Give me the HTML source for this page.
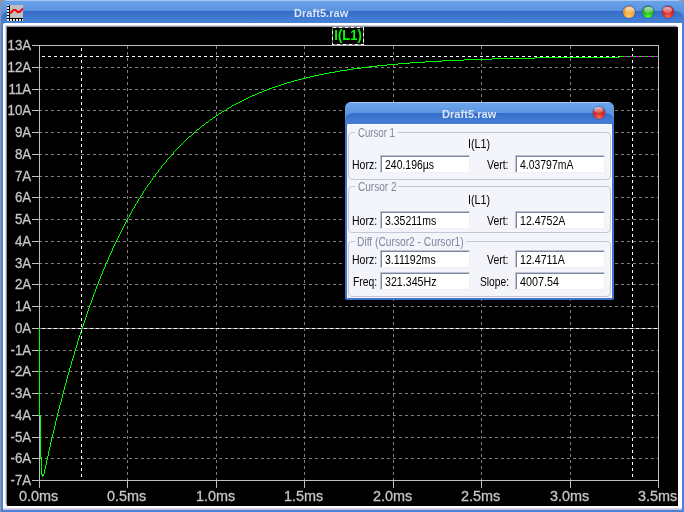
<!DOCTYPE html>
<html><head><meta charset="utf-8"><title>Draft5.raw</title>
<style>
html,body{margin:0;padding:0;}
body{width:684px;height:512px;overflow:hidden;background:#92949f;position:relative;font-family:"Liberation Sans",sans-serif;}
#win{position:absolute;left:1px;top:0;width:683px;height:512px;border-radius:6px 6px 0 0;overflow:hidden;
 background:#4a80d8;}
#tbar{position:absolute;left:0;top:0;width:683px;height:23px;
 background:linear-gradient(to bottom,#a9c4f0 0px,#a9c4f0 1px,#68a3e9 1px,#5b93df 11px,#5a90dd 23px);}
#tbar:after{content:"";position:absolute;left:0;top:11px;width:100%;height:12px;border-radius:9px 9px 0 0 / 7px 7px 0 0;
 background:linear-gradient(to bottom,#346bc8 0px,#3f78d0 6px,#4682d8 12px);}
#title{will-change:transform;position:absolute;left:292.5px;top:6px;white-space:nowrap;color:#dbe6f8;font-weight:bold;font-size:11px;line-height:14px;letter-spacing:0.05px;}
#frame{position:absolute;left:2px;top:23px;width:679px;height:487px;background:#fff;border-radius:2px 0 0 0;}
#frame:after{content:"";position:absolute;left:0;bottom:0;right:0;height:2px;background:linear-gradient(to bottom,#dcd6ea,#c8c0dc);}
#plot{position:absolute;left:6px;top:27px;width:671px;height:479px;background:#000;box-shadow:-1px -1px 0 #8f8fa6,-2px -2px 0 #d4d4e0;}
svg{position:absolute;left:0;top:0;}
#main{will-change:transform;}

#icon{position:absolute;left:6px;top:5px;}
.btn{position:absolute;width:12px;height:12px;border-radius:50%;box-shadow:0 0 0 1px rgba(40,80,190,.5);}
.b-or{background:radial-gradient(circle at 50% 88%,#ffcf60 0%,#f4a634 40%,#e8922c 75%,#d88428 100%);}
.b-gr{background:radial-gradient(circle at 50% 88%,#48ff38 0%,#24b424 40%,#229a2a 75%,#1e8a2c 100%);}
.b-rd{background:radial-gradient(circle at 50% 88%,#ff6a50 0%,#d42c28 40%,#c02424 75%,#b02024 100%);}
.btn:after{content:"";position:absolute;left:1.5px;top:0.5px;width:9px;height:6px;border-radius:50%;background:linear-gradient(to bottom,rgba(255,255,255,.7),rgba(255,255,255,.2));}
#dlg{position:absolute;left:345px;top:102px;width:269px;height:198px;border-radius:6px 6px 2px 2px;overflow:hidden;background:#3f74cf;}
#dbar{position:absolute;left:0;top:0;width:269px;height:22px;
 background:linear-gradient(to bottom,#a9c4f0 0px,#a9c4f0 1px,#6aa5ea 1px,#5d95e0 11px,#5a90dd 22px);}
#dbar:after{content:"";position:absolute;left:0;top:11px;width:100%;height:11px;border-radius:9px 9px 0 0 / 7px 7px 0 0;
 background:linear-gradient(to bottom,#346bc8 0px,#3f78d0 6px,#4580d6 11px);}
#dtitle{will-change:transform;position:absolute;left:96.5px;top:5px;white-space:nowrap;color:#dbe6f8;font-weight:bold;font-size:11px;line-height:14px;letter-spacing:0.05px;}
#dbody{will-change:transform;position:absolute;left:2px;top:22px;width:265px;height:174px;background:#f4f4fb;border-radius:2px 2px 0 0;box-shadow:inset 0 1px 0 #fff,inset -1px 0 0 #fff;}
.grp{position:absolute;left:1px;width:263px;border:1px solid #c6c6d6;border-radius:4px;box-sizing:border-box;}
.gap{position:absolute;left:6px;top:-1px;height:1px;background:#f4f4fb;}
.tx{position:absolute;font-size:13px;line-height:15px;height:15px;white-space:nowrap;transform-origin:0 0;color:#000;}
.tx.g{color:#7d869e;}
.in{position:absolute;width:90px;height:18px;box-sizing:border-box;background:#fff;border-top:1px solid #bfc3d0;border-left:1px solid #bfc3d0;border-right:1px solid #eeeef6;border-bottom:1px solid #eeeef6;box-shadow:inset 1px 1px 0 #7d859e;}
</style></head><body>
<div id="win">
 <div id="tbar"></div>
 <div id="title">Draft5.raw</div>

 <svg id="icon" width="16" height="16" viewBox="0 0 16 16" shape-rendering="crispEdges">
  <rect x="0" y="0" width="16" height="16" fill="#f0e8d8"/>
  <rect x="3" y="0" width="13" height="13" fill="#c0c0c0"/>
  <g fill="#000">
   <rect x="2" y="0" width="1" height="16"/>
   <rect x="0" y="13" width="16" height="1"/>
   <rect x="0" y="1" width="2" height="1"/><rect x="0" y="4" width="2" height="1"/><rect x="0" y="7" width="2" height="1"/><rect x="0" y="10" width="2" height="1"/>
   <rect x="5" y="14" width="1" height="2"/><rect x="8" y="14" width="1" height="2"/><rect x="11" y="14" width="1" height="2"/><rect x="14" y="14" width="1" height="2"/>
  </g>
  <polyline points="3,8.5 6.5,5 8.5,5 10.5,7 12.5,7 16,3.5" fill="none" stroke="#ff0000" stroke-width="2" shape-rendering="auto"/>
 </svg>
 <div class="btn b-or" style="left:622px;top:6px"></div>
 <div class="btn b-gr" style="left:641px;top:6px"></div>
 <div class="btn b-rd" style="left:660.7px;top:6px"></div>
 <div id="frame"></div>
 <div id="plot"></div>
</div>
<svg id="main" width="684" height="512" viewBox="0 0 684 512" shape-rendering="crispEdges">
 <g stroke="#808080" stroke-width="1" stroke-dasharray="3 3" fill="none">
<line x1="39" y1="67.5" x2="658" y2="67.5"/>
<line x1="39" y1="89.5" x2="658" y2="89.5"/>
<line x1="39" y1="110.5" x2="658" y2="110.5"/>
<line x1="39" y1="132.5" x2="658" y2="132.5"/>
<line x1="39" y1="154.5" x2="658" y2="154.5"/>
<line x1="39" y1="176.5" x2="658" y2="176.5"/>
<line x1="39" y1="197.5" x2="658" y2="197.5"/>
<line x1="39" y1="219.5" x2="658" y2="219.5"/>
<line x1="39" y1="241.5" x2="658" y2="241.5"/>
<line x1="39" y1="263.5" x2="658" y2="263.5"/>
<line x1="39" y1="284.5" x2="658" y2="284.5"/>
<line x1="39" y1="306.5" x2="658" y2="306.5"/>
<line x1="39" y1="328.5" x2="658" y2="328.5"/>
<line x1="39" y1="350.5" x2="658" y2="350.5"/>
<line x1="39" y1="371.5" x2="658" y2="371.5"/>
<line x1="39" y1="393.5" x2="658" y2="393.5"/>
<line x1="39" y1="415.5" x2="658" y2="415.5"/>
<line x1="39" y1="437.5" x2="658" y2="437.5"/>
<line x1="39" y1="458.5" x2="658" y2="458.5"/>
<line x1="127.5" y1="46" x2="127.5" y2="480"/>
<line x1="216.5" y1="46" x2="216.5" y2="480"/>
<line x1="304.5" y1="46" x2="304.5" y2="480"/>
<line x1="393.5" y1="46" x2="393.5" y2="480"/>
<line x1="481.5" y1="46" x2="481.5" y2="480"/>
<line x1="570.5" y1="46" x2="570.5" y2="480"/>
 </g>
 <g stroke="#c0c0c0" stroke-width="1" fill="none">
  <rect x="39.5" y="45.5" width="619" height="435"/>
<line x1="32" y1="45.5" x2="39" y2="45.5"/>
<line x1="32" y1="67.5" x2="39" y2="67.5"/>
<line x1="32" y1="89.5" x2="39" y2="89.5"/>
<line x1="32" y1="110.5" x2="39" y2="110.5"/>
<line x1="32" y1="132.5" x2="39" y2="132.5"/>
<line x1="32" y1="154.5" x2="39" y2="154.5"/>
<line x1="32" y1="176.5" x2="39" y2="176.5"/>
<line x1="32" y1="197.5" x2="39" y2="197.5"/>
<line x1="32" y1="219.5" x2="39" y2="219.5"/>
<line x1="32" y1="241.5" x2="39" y2="241.5"/>
<line x1="32" y1="263.5" x2="39" y2="263.5"/>
<line x1="32" y1="284.5" x2="39" y2="284.5"/>
<line x1="32" y1="306.5" x2="39" y2="306.5"/>
<line x1="32" y1="328.5" x2="39" y2="328.5"/>
<line x1="32" y1="350.5" x2="39" y2="350.5"/>
<line x1="32" y1="371.5" x2="39" y2="371.5"/>
<line x1="32" y1="393.5" x2="39" y2="393.5"/>
<line x1="32" y1="415.5" x2="39" y2="415.5"/>
<line x1="32" y1="437.5" x2="39" y2="437.5"/>
<line x1="32" y1="458.5" x2="39" y2="458.5"/>
<line x1="32" y1="480.5" x2="39" y2="480.5"/>
<line x1="39.5" y1="481" x2="39.5" y2="488"/>
<line x1="127.5" y1="481" x2="127.5" y2="488"/>
<line x1="216.5" y1="481" x2="216.5" y2="488"/>
<line x1="304.5" y1="481" x2="304.5" y2="488"/>
<line x1="393.5" y1="481" x2="393.5" y2="488"/>
<line x1="481.5" y1="481" x2="481.5" y2="488"/>
<line x1="570.5" y1="481" x2="570.5" y2="488"/>
<line x1="658.5" y1="481" x2="658.5" y2="488"/>
 </g>
 <g font-family="'Liberation Sans',sans-serif" font-size="14" fill="#c4c4c4" stroke="#c4c4c4" stroke-width="0.3" shape-rendering="auto">
<text transform="translate(31.2 50) scale(0.95 1)" text-anchor="end">13A</text>
<text transform="translate(31.2 72) scale(0.95 1)" text-anchor="end">12A</text>
<text transform="translate(31.2 94) scale(0.95 1)" text-anchor="end">11A</text>
<text transform="translate(31.2 115) scale(0.95 1)" text-anchor="end">10A</text>
<text transform="translate(31.2 137) scale(0.95 1)" text-anchor="end">9A</text>
<text transform="translate(31.2 159) scale(0.95 1)" text-anchor="end">8A</text>
<text transform="translate(31.2 181) scale(0.95 1)" text-anchor="end">7A</text>
<text transform="translate(31.2 202) scale(0.95 1)" text-anchor="end">6A</text>
<text transform="translate(31.2 224) scale(0.95 1)" text-anchor="end">5A</text>
<text transform="translate(31.2 246) scale(0.95 1)" text-anchor="end">4A</text>
<text transform="translate(31.2 268) scale(0.95 1)" text-anchor="end">3A</text>
<text transform="translate(31.2 289) scale(0.95 1)" text-anchor="end">2A</text>
<text transform="translate(31.2 311) scale(0.95 1)" text-anchor="end">1A</text>
<text transform="translate(31.2 333) scale(0.95 1)" text-anchor="end">0A</text>
<text transform="translate(31.2 355) scale(0.95 1)" text-anchor="end">-1A</text>
<text transform="translate(31.2 376) scale(0.95 1)" text-anchor="end">-2A</text>
<text transform="translate(31.2 398) scale(0.95 1)" text-anchor="end">-3A</text>
<text transform="translate(31.2 420) scale(0.95 1)" text-anchor="end">-4A</text>
<text transform="translate(31.2 442) scale(0.95 1)" text-anchor="end">-5A</text>
<text transform="translate(31.2 463) scale(0.95 1)" text-anchor="end">-6A</text>
<text transform="translate(31.2 485) scale(0.95 1)" text-anchor="end">-7A</text>
<text transform="translate(38.7 500.5) scale(1.03 1)" text-anchor="middle">0.0ms</text>
<text transform="translate(126.7 500.5) scale(1.03 1)" text-anchor="middle">0.5ms</text>
<text transform="translate(215.7 500.5) scale(1.03 1)" text-anchor="middle">1.0ms</text>
<text transform="translate(303.7 500.5) scale(1.03 1)" text-anchor="middle">1.5ms</text>
<text transform="translate(392.7 500.5) scale(1.03 1)" text-anchor="middle">2.0ms</text>
<text transform="translate(480.7 500.5) scale(1.03 1)" text-anchor="middle">2.5ms</text>
<text transform="translate(569.7 500.5) scale(1.03 1)" text-anchor="middle">3.0ms</text>
<text transform="translate(657.7 500.5) scale(1.03 1)" text-anchor="middle">3.5ms</text>
 </g>
 <path d="M39,328h1v88h-1zM40,415h1v43h-1zM41,457h1v18h-1zM42,474h1v3h-1zM43,474h1v2h-1zM44,469h1v5h-1zM45,465h1v4h-1zM46,460h1v5h-1zM47,456h1v4h-1zM48,451h1v5h-1zM49,447h1v4h-1zM50,442h1v5h-1zM51,438h1v4h-1zM52,434h1v4h-1zM53,430h1v4h-1zM54,426h1v4h-1zM55,421h1v5h-1zM56,417h1v4h-1zM57,413h1v4h-1zM58,409h1v4h-1zM59,405h1v4h-1zM60,402h1v3h-1zM61,398h1v4h-1zM62,394h1v4h-1zM63,390h1v4h-1zM64,386h1v4h-1zM65,383h1v3h-1zM66,379h1v4h-1zM67,375h1v4h-1zM68,372h1v3h-1zM69,368h1v4h-1zM70,365h1v3h-1zM71,361h1v4h-1zM72,358h1v3h-1zM73,355h1v3h-1zM74,351h1v4h-1zM75,348h1v3h-1zM76,345h1v3h-1zM77,341h1v4h-1zM78,338h1v3h-1zM79,335h1v3h-1zM80,332h1v3h-1zM81,329h1v3h-1zM82,326h1v3h-1zM83,323h1v3h-1zM84,320h1v3h-1zM85,317h1v3h-1zM86,314h1v3h-1zM87,311h1v3h-1zM88,308h1v3h-1zM89,305h1v3h-1zM90,303h1v2h-1zM91,300h1v3h-1zM92,297h1v3h-1zM93,294h1v3h-1zM94,292h1v2h-1zM95,289h1v3h-1zM96,286h1v3h-1zM97,284h1v2h-1zM98,281h1v3h-1zM99,279h1v2h-1zM100,276h1v3h-1zM101,274h1v2h-1zM102,271h1v3h-1zM103,269h1v2h-1zM104,267h1v2h-1zM105,264h1v3h-1zM106,262h1v2h-1zM107,260h1v2h-1zM108,257h1v3h-1zM109,255h1v2h-1zM110,253h1v2h-1zM111,251h1v2h-1zM112,248h1v3h-1zM113,246h1v2h-1zM114,244h1v2h-1zM115,242h1v2h-1zM116,240h1v2h-1zM117,238h1v2h-1zM118,236h1v2h-1zM119,234h1v2h-1zM120,232h1v2h-1zM121,230h1v2h-1zM122,228h1v2h-1zM123,226h1v2h-1zM124,224h1v2h-1zM125,222h1v2h-1zM126,220h1v2h-1zM127,218h1v2h-1zM128,217h1v1h-1zM129,215h1v2h-1zM130,213h1v2h-1zM131,211h1v2h-1zM132,209h1v2h-1zM133,208h1v1h-1zM134,206h1v2h-1zM135,204h1v2h-1zM136,203h1v1h-1zM137,201h1v2h-1zM138,199h1v2h-1zM139,198h1v1h-1zM140,196h1v2h-1zM141,195h1v1h-1zM142,193h1v2h-1zM143,191h1v2h-1zM144,190h1v1h-1zM145,188h1v2h-1zM146,187h1v1h-1zM147,185h1v2h-1zM148,184h1v1h-1zM149,183h1v1h-1zM150,181h1v2h-1zM151,180h1v1h-1zM152,178h1v2h-1zM153,177h1v1h-1zM154,176h1v1h-1zM155,174h1v2h-1zM156,173h1v1h-1zM157,172h1v1h-1zM158,170h1v2h-1zM159,169h1v1h-1zM160,168h1v1h-1zM161,166h1v2h-1zM162,165h1v1h-1zM163,164h1v1h-1zM164,163h1v1h-1zM165,162h1v1h-1zM166,160h1v2h-1zM167,159h1v1h-1zM168,158h1v1h-1zM169,157h1v1h-1zM170,156h1v1h-1zM171,155h1v1h-1zM172,154h1v1h-1zM173,152h1v2h-1zM174,151h1v1h-1zM175,150h1v1h-1zM176,149h1v1h-1zM177,148h1v1h-1zM178,147h1v1h-1zM179,146h1v1h-1zM180,145h1v1h-1zM181,144h1v1h-1zM182,143h1v1h-1zM183,142h1v1h-1zM184,141h1v1h-1zM185,140h1v1h-1zM186,139h1v1h-1zM187,138h1v1h-1zM188,137h1v1h-1zM189,136h1v1h-1zM190,136h1v1h-1zM191,135h1v1h-1zM192,134h1v1h-1zM193,133h1v1h-1zM194,132h1v1h-1zM195,131h1v1h-1zM196,130h1v1h-1zM197,129h1v1h-1zM198,129h1v1h-1zM199,128h1v1h-1zM200,127h1v1h-1zM201,126h1v1h-1zM202,125h1v1h-1zM203,125h1v1h-1zM204,124h1v1h-1zM205,123h1v1h-1zM206,122h1v1h-1zM207,122h1v1h-1zM208,121h1v1h-1zM209,120h1v1h-1zM210,119h1v1h-1zM211,119h1v1h-1zM212,118h1v1h-1zM213,117h1v1h-1zM214,117h1v1h-1zM215,116h1v1h-1zM216,115h1v1h-1zM217,115h1v1h-1zM218,114h1v1h-1zM219,113h1v1h-1zM220,113h1v1h-1zM221,112h1v1h-1zM222,111h1v1h-1zM223,111h1v1h-1zM224,110h1v1h-1zM225,110h1v1h-1zM226,109h1v1h-1zM227,108h1v1h-1zM228,108h1v1h-1zM229,107h1v1h-1zM230,107h1v1h-1zM231,106h1v1h-1zM232,105h1v1h-1zM233,105h1v1h-1zM234,104h1v1h-1zM235,104h1v1h-1zM236,103h1v1h-1zM237,103h1v1h-1zM238,102h1v1h-1zM239,102h1v1h-1zM240,101h1v1h-1zM241,101h1v1h-1zM242,100h1v1h-1zM243,100h1v1h-1zM244,99h1v1h-1zM245,99h1v1h-1zM246,98h1v1h-1zM247,98h1v1h-1zM248,97h1v1h-1zM249,97h1v1h-1zM250,96h1v1h-1zM251,96h1v1h-1zM252,95h1v1h-1zM253,95h1v1h-1zM254,95h1v1h-1zM255,94h1v1h-1zM256,94h1v1h-1zM257,93h1v1h-1zM258,93h1v1h-1zM259,92h1v1h-1zM260,92h1v1h-1zM261,92h1v1h-1zM262,91h1v1h-1zM263,91h1v1h-1zM264,90h1v1h-1zM265,90h1v1h-1zM266,90h1v1h-1zM267,89h1v1h-1zM268,89h1v1h-1zM269,88h1v1h-1zM270,88h1v1h-1zM271,88h1v1h-1zM272,87h1v1h-1zM273,87h1v1h-1zM274,87h1v1h-1zM275,86h1v1h-1zM276,86h1v1h-1zM277,86h1v1h-1zM278,85h1v1h-1zM279,85h1v1h-1zM280,85h1v1h-1zM281,84h1v1h-1zM282,84h1v1h-1zM283,84h1v1h-1zM284,83h1v1h-1zM285,83h1v1h-1zM286,83h1v1h-1zM287,82h1v1h-1zM288,82h1v1h-1zM289,82h1v1h-1zM290,82h1v1h-1zM291,81h1v1h-1zM292,81h1v1h-1zM293,81h1v1h-1zM294,80h1v1h-1zM295,80h1v1h-1zM296,80h1v1h-1zM297,80h1v1h-1zM298,79h1v1h-1zM299,79h1v1h-1zM300,79h1v1h-1zM301,79h1v1h-1zM302,78h1v1h-1zM303,78h1v1h-1zM304,78h1v1h-1zM305,78h1v1h-1zM306,77h1v1h-1zM307,77h1v1h-1zM308,77h1v1h-1zM309,77h1v1h-1zM310,76h1v1h-1zM311,76h1v1h-1zM312,76h1v1h-1zM313,76h1v1h-1zM314,75h1v1h-1zM315,75h1v1h-1zM316,75h1v1h-1zM317,75h1v1h-1zM318,75h1v1h-1zM319,74h1v1h-1zM320,74h1v1h-1zM321,74h1v1h-1zM322,74h1v1h-1zM323,74h1v1h-1zM324,73h1v1h-1zM325,73h1v1h-1zM326,73h1v1h-1zM327,73h1v1h-1zM328,73h1v1h-1zM329,72h1v1h-1zM330,72h1v1h-1zM331,72h1v1h-1zM332,72h1v1h-1zM333,72h1v1h-1zM334,72h1v1h-1zM335,71h1v1h-1zM336,71h1v1h-1zM337,71h1v1h-1zM338,71h1v1h-1zM339,71h1v1h-1zM340,70h1v1h-1zM341,70h1v1h-1zM342,70h1v1h-1zM343,70h1v1h-1zM344,70h1v1h-1zM345,70h1v1h-1zM346,70h1v1h-1zM347,69h1v1h-1zM348,69h1v1h-1zM349,69h1v1h-1zM350,69h1v1h-1zM351,69h1v1h-1zM352,69h1v1h-1zM353,68h1v1h-1zM354,68h1v1h-1zM355,68h1v1h-1zM356,68h1v1h-1zM357,68h1v1h-1zM358,68h1v1h-1zM359,68h1v1h-1zM360,68h1v1h-1zM361,67h1v1h-1zM362,67h1v1h-1zM363,67h1v1h-1zM364,67h1v1h-1zM365,67h1v1h-1zM366,67h1v1h-1zM367,67h1v1h-1zM368,67h1v1h-1zM369,66h1v1h-1zM370,66h1v1h-1zM371,66h1v1h-1zM372,66h1v1h-1zM373,66h1v1h-1zM374,66h1v1h-1zM375,66h1v1h-1zM376,66h1v1h-1zM377,65h1v1h-1zM378,65h1v1h-1zM379,65h1v1h-1zM380,65h1v1h-1zM381,65h1v1h-1zM382,65h1v1h-1zM383,65h1v1h-1zM384,65h1v1h-1zM385,65h1v1h-1zM386,65h1v1h-1zM387,64h1v1h-1zM388,64h1v1h-1zM389,64h1v1h-1zM390,64h1v1h-1zM391,64h1v1h-1zM392,64h1v1h-1zM393,64h1v1h-1zM394,64h1v1h-1zM395,64h1v1h-1zM396,64h1v1h-1zM397,64h1v1h-1zM398,63h1v1h-1zM399,63h1v1h-1zM400,63h1v1h-1zM401,63h1v1h-1zM402,63h1v1h-1zM403,63h1v1h-1zM404,63h1v1h-1zM405,63h1v1h-1zM406,63h1v1h-1zM407,63h1v1h-1zM408,63h1v1h-1zM409,63h1v1h-1zM410,62h1v1h-1zM411,62h1v1h-1zM412,62h1v1h-1zM413,62h1v1h-1zM414,62h1v1h-1zM415,62h1v1h-1zM416,62h1v1h-1zM417,62h1v1h-1zM418,62h1v1h-1zM419,62h1v1h-1zM420,62h1v1h-1zM421,62h1v1h-1zM422,62h1v1h-1zM423,62h1v1h-1zM424,62h1v1h-1zM425,61h1v1h-1zM426,61h1v1h-1zM427,61h1v1h-1zM428,61h1v1h-1zM429,61h1v1h-1zM430,61h1v1h-1zM431,61h1v1h-1zM432,61h1v1h-1zM433,61h1v1h-1zM434,61h1v1h-1zM435,61h1v1h-1zM436,61h1v1h-1zM437,61h1v1h-1zM438,61h1v1h-1zM439,61h1v1h-1zM440,61h1v1h-1zM441,61h1v1h-1zM442,60h1v1h-1zM443,60h1v1h-1zM444,60h1v1h-1zM445,60h1v1h-1zM446,60h1v1h-1zM447,60h1v1h-1zM448,60h1v1h-1zM449,60h1v1h-1zM450,60h1v1h-1zM451,60h1v1h-1zM452,60h1v1h-1zM453,60h1v1h-1zM454,60h1v1h-1zM455,60h1v1h-1zM456,60h1v1h-1zM457,60h1v1h-1zM458,60h1v1h-1zM459,60h1v1h-1zM460,60h1v1h-1zM461,60h1v1h-1zM462,60h1v1h-1zM463,60h1v1h-1zM464,59h1v1h-1zM465,59h1v1h-1zM466,59h1v1h-1zM467,59h1v1h-1zM468,59h1v1h-1zM469,59h1v1h-1zM470,59h1v1h-1zM471,59h1v1h-1zM472,59h1v1h-1zM473,59h1v1h-1zM474,59h1v1h-1zM475,59h1v1h-1zM476,59h1v1h-1zM477,59h1v1h-1zM478,59h1v1h-1zM479,59h1v1h-1zM480,59h1v1h-1zM481,59h1v1h-1zM482,59h1v1h-1zM483,59h1v1h-1zM484,59h1v1h-1zM485,59h1v1h-1zM486,59h1v1h-1zM487,59h1v1h-1zM488,59h1v1h-1zM489,59h1v1h-1zM490,59h1v1h-1zM491,59h1v1h-1zM492,58h1v1h-1zM493,58h1v1h-1zM494,58h1v1h-1zM495,58h1v1h-1zM496,58h1v1h-1zM497,58h1v1h-1zM498,58h1v1h-1zM499,58h1v1h-1zM500,58h1v1h-1zM501,58h1v1h-1zM502,58h1v1h-1zM503,58h1v1h-1zM504,58h1v1h-1zM505,58h1v1h-1zM506,58h1v1h-1zM507,58h1v1h-1zM508,58h1v1h-1zM509,58h1v1h-1zM510,58h1v1h-1zM511,58h1v1h-1zM512,58h1v1h-1zM513,58h1v1h-1zM514,58h1v1h-1zM515,58h1v1h-1zM516,58h1v1h-1zM517,58h1v1h-1zM518,58h1v1h-1zM519,58h1v1h-1zM520,58h1v1h-1zM521,58h1v1h-1zM522,58h1v1h-1zM523,58h1v1h-1zM524,58h1v1h-1zM525,58h1v1h-1zM526,58h1v1h-1zM527,58h1v1h-1zM528,58h1v1h-1zM529,58h1v1h-1zM530,58h1v1h-1zM531,58h1v1h-1zM532,58h1v1h-1zM533,58h1v1h-1zM534,58h1v1h-1zM535,57h1v1h-1zM536,57h1v1h-1zM537,57h1v1h-1zM538,57h1v1h-1zM539,57h1v1h-1zM540,57h1v1h-1zM541,57h1v1h-1zM542,57h1v1h-1zM543,57h1v1h-1zM544,57h1v1h-1zM545,57h1v1h-1zM546,57h1v1h-1zM547,57h1v1h-1zM548,57h1v1h-1zM549,57h1v1h-1zM550,57h1v1h-1zM551,57h1v1h-1zM552,57h1v1h-1zM553,57h1v1h-1zM554,57h1v1h-1zM555,57h1v1h-1zM556,57h1v1h-1zM557,57h1v1h-1zM558,57h1v1h-1zM559,57h1v1h-1zM560,57h1v1h-1zM561,57h1v1h-1zM562,57h1v1h-1zM563,57h1v1h-1zM564,57h1v1h-1zM565,57h1v1h-1zM566,57h1v1h-1zM567,57h1v1h-1zM568,57h1v1h-1zM569,57h1v1h-1zM570,57h1v1h-1zM571,57h1v1h-1zM572,57h1v1h-1zM573,57h1v1h-1zM574,57h1v1h-1zM575,57h1v1h-1zM576,57h1v1h-1zM577,57h1v1h-1zM578,57h1v1h-1zM579,57h1v1h-1zM580,57h1v1h-1zM581,57h1v1h-1zM582,57h1v1h-1zM583,57h1v1h-1zM584,57h1v1h-1zM585,57h1v1h-1zM586,57h1v1h-1zM587,57h1v1h-1zM588,57h1v1h-1zM589,57h1v1h-1zM590,57h1v1h-1zM591,57h1v1h-1zM592,57h1v1h-1zM593,57h1v1h-1zM594,57h1v1h-1zM595,57h1v1h-1zM596,57h1v1h-1zM597,57h1v1h-1zM598,57h1v1h-1zM599,57h1v1h-1zM600,57h1v1h-1zM601,57h1v1h-1zM602,57h1v1h-1zM603,57h1v1h-1zM604,57h1v1h-1zM605,57h1v1h-1zM606,57h1v1h-1zM607,57h1v1h-1zM608,57h1v1h-1zM609,57h1v1h-1zM610,57h1v1h-1zM611,57h1v1h-1zM612,57h1v1h-1zM613,57h1v1h-1zM614,57h1v1h-1zM615,57h1v1h-1zM616,57h1v1h-1zM617,57h1v1h-1zM618,57h1v1h-1zM619,56h1v1h-1zM620,56h1v1h-1zM621,56h1v1h-1zM622,56h1v1h-1zM623,56h1v1h-1zM624,56h1v1h-1zM625,56h1v1h-1zM626,56h1v1h-1zM627,56h1v1h-1zM628,56h1v1h-1zM629,56h1v1h-1zM630,56h1v1h-1zM631,56h1v1h-1zM632,56h1v1h-1zM633,56h1v1h-1zM634,56h1v1h-1zM635,56h1v1h-1zM636,56h1v1h-1zM637,56h1v1h-1zM638,56h1v1h-1zM639,56h1v1h-1zM640,56h1v1h-1zM641,56h1v1h-1zM642,56h1v1h-1zM643,56h1v1h-1zM644,56h1v1h-1zM645,56h1v1h-1zM646,56h1v1h-1zM647,56h1v1h-1zM648,56h1v1h-1zM649,56h1v1h-1zM650,56h1v1h-1zM651,56h1v1h-1zM652,56h1v1h-1zM653,56h1v1h-1zM654,56h1v1h-1zM655,56h1v1h-1zM656,56h1v1h-1zM657,56h1v1h-1zM658,56h1v1h-1z" fill="#00ff00"/>
 <g stroke="#ffffff" stroke-width="1" stroke-dasharray="3 3" fill="none">
  <line x1="42" y1="56.5" x2="620" y2="56.5"/>
  <line x1="42" y1="328.5" x2="658" y2="328.5"/>
  <line x1="81.5" y1="48" x2="81.5" y2="480"/>
  <line x1="632.5" y1="48" x2="632.5" y2="480"/>
 </g>
 <g stroke="#ff00ff" stroke-width="1" stroke-dasharray="3 3" fill="none"><line x1="624" y1="56.5" x2="658" y2="56.5"/></g>
 <rect x="332.5" y="27.5" width="31" height="17" fill="#000" stroke="#707070"/>
 <rect x="332.5" y="27.5" width="31" height="17" fill="none" stroke="#fff" stroke-dasharray="3 3"/>
 <text transform="translate(348 40) scale(0.93 1)" text-anchor="middle" font-family="'Liberation Sans',sans-serif" font-size="14" font-weight="bold" fill="#00ff00" shape-rendering="auto">I(L1)</text>
</svg>

<div id="dlg">
 <div id="dbar"></div>
 <div id="dtitle">Draft5.raw</div>
 <div class="btn b-rd" style="left:247.9px;top:4.7px"></div>
 <div id="dbody">
  <div class="grp" style="top:8px;height:48px"><div class="gap" style="width:43px"></div></div>
  <div class="grp" style="top:62px;height:47px"><div class="gap" style="width:43px"></div></div>
  <div class="grp" style="top:117px;height:56px"><div class="gap" style="width:111px"></div></div>
  <div class="in" style="left:33px;top:31px"></div>
  <div class="in" style="left:168px;top:31px"></div>
  <div class="in" style="left:33px;top:87px"></div>
  <div class="in" style="left:168px;top:87px"></div>
  <div class="in" style="left:33px;top:126px"></div>
  <div class="in" style="left:168px;top:126px"></div>
  <div class="in" style="left:33px;top:148px"></div>
  <div class="in" style="left:168px;top:148px"></div>
  <div class="tx g" style="left:10.80px;top:1px;transform:scaleX(0.7417)">Cursor 1</div>
  <div class="tx g" style="left:10.80px;top:55px;transform:scaleX(0.7739)">Cursor 2</div>
  <div class="tx g" style="left:9.91px;top:110px;transform:scaleX(0.7867)">Diff (Cursor2 - Cursor1)</div>
  <div class="tx" style="left:120.87px;top:12px;transform:scaleX(0.8267)">I(L1)</div>
  <div class="tx" style="left:120.87px;top:68px;transform:scaleX(0.8267)">I(L1)</div>
  <div class="tx" style="left:4.59px;top:33px;transform:scaleX(0.8082)">Horz:</div>
  <div class="tx" style="left:4.59px;top:89px;transform:scaleX(0.8082)">Horz:</div>
  <div class="tx" style="left:4.59px;top:128px;transform:scaleX(0.8082)">Horz:</div>
  <div class="tx" style="left:6.00px;top:150px;transform:scaleX(0.7971)">Freq:</div>
  <div class="tx" style="left:140.30px;top:33px;transform:scaleX(0.8038)">Vert:</div>
  <div class="tx" style="left:140.30px;top:89px;transform:scaleX(0.8038)">Vert:</div>
  <div class="tx" style="left:140.30px;top:128px;transform:scaleX(0.8038)">Vert:</div>
  <div class="tx" style="left:132.70px;top:150px;transform:scaleX(0.7890)">Slope:</div>
  <div class="tx" style="left:37.90px;top:33px;transform:scaleX(0.8051)">240.196µs</div>
  <div class="tx" style="left:172.60px;top:33px;transform:scaleX(0.8021)">4.03797mA</div>
  <div class="tx" style="left:37.60px;top:89px;transform:scaleX(0.8081)">3.35211ms</div>
  <div class="tx" style="left:172.60px;top:89px;transform:scaleX(0.8144)">12.4752A</div>
  <div class="tx" style="left:37.90px;top:128px;transform:scaleX(0.8125)">3.11192ms</div>
  <div class="tx" style="left:173.00px;top:128px;transform:scaleX(0.8178)">12.4711A</div>
  <div class="tx" style="left:37.90px;top:150px;transform:scaleX(0.8192)">321.345Hz</div>
  <div class="tx" style="left:172.60px;top:150px;transform:scaleX(0.8276)">4007.54</div>
 </div>
</div>
</body></html>
